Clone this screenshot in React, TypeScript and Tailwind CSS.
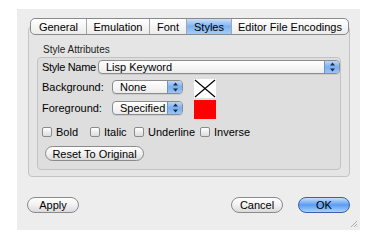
import React from "react";

const font = { fontFamily: '"Liberation Sans", Arial, sans-serif' };

function Arrows() {
  return (
    <svg width="7" height="10" viewBox="0 0 7 10">
      <path d="M3.5 0.5 L6 3.5 L1 3.5 Z" fill="#1b2a4a" />
      <path d="M3.5 9.5 L6 6.5 L1 6.5 Z" fill="#1b2a4a" />
    </svg>
  );
}

function Popup({ label, className }: { label: string; className: string }) {
  return (
    <div
      className={`flex items-stretch h-[14px] rounded-[4px] border border-[#8c8c8c] bg-gradient-to-b from-white to-[#ececec] shadow-[0_1px_0_rgba(0,0,0,0.08)] overflow-hidden ${className}`}
    >
      <span className="flex-1 pl-[7px] text-[11px] leading-[12px] text-black whitespace-nowrap">{label}</span>
      <span className="w-[15px] flex items-center justify-center border-l border-[#6f93c7] bg-gradient-to-b from-[#bcd6f6] via-[#79aeee] to-[#9ac5f6]">
        <Arrows />
      </span>
    </div>
  );
}

function Check({ label }: { label: string }) {
  return (
    <div className="flex items-center gap-[4px]">
      <span className="w-[10px] h-[10px] rounded-[2px] border border-[#8a8a8a] bg-gradient-to-b from-white to-[#dcdcdc]" />
      <span className="text-[11px] leading-[12px] text-black whitespace-nowrap">{label}</span>
    </div>
  );
}

function Button({ label, className, blue }: { label: string; className: string; blue?: boolean }) {
  return (
    <div
      className={`rounded-full border flex items-center justify-center text-[11px] leading-[12px] text-black whitespace-nowrap ${
        blue
          ? "border-[#3b5fa8] bg-gradient-to-b from-[#c6defa] via-[#5a9cf0] to-[#a9d2fb]"
          : "border-[#8a8a8a] bg-gradient-to-b from-white via-[#f1f1f1] to-[#dadada]"
      } ${className}`}
    >
      {label}
    </div>
  );
}

const tabs = ["General", "Emulation", "Font", "Styles", "Editor File Encodings"];
const tabWidths = ["w-[55px]", "w-[63px]", "w-[37px]", "w-[45px]", "w-[117px]"];

export default function App() {
  return (
    <div className="w-[379px] h-[242px] bg-white pt-[9px] pl-[17px]" style={font}>
      <div className="w-[343px] h-[221px] bg-[#ededed] flex flex-col relative">
        <div className="flex pt-[9px] pl-[13px] relative z-10">
          <div className="flex h-[17px] rounded-[5px] border border-[#8a8a8a] bg-gradient-to-b from-white to-[#ececec] overflow-hidden">
            {tabs.map((t, i) => (
              <div
                key={t}
                className={`${tabWidths[i]} flex items-center justify-center text-[11px] leading-[12px] text-black whitespace-nowrap ${
                  i > 0 ? "border-l border-[#a5a5a5]" : ""
                } ${t === "Styles" ? "bg-gradient-to-b from-[#c9e0fb] via-[#7eb2ef] to-[#a3cdf8]" : ""}`}
              >
                {t}
              </div>
            ))}
          </div>
        </div>
        <div className="ml-[11px] mr-[10px] -mt-[9px] h-[151px] rounded-[4px] border border-[#c4c4c4] bg-[#e5e5e5] px-[8px] pt-[17px]">
          <div className="text-[10px] leading-[11px] text-[#222] pl-[6px] whitespace-nowrap">Style Attributes</div>
          <div className="mt-[2px] h-[113px] rounded-[4px] border border-[#c2c2c2] bg-[#dedede] pl-[4px] pt-[2px]">
            <div className="flex items-center">
              <span className="w-[56px] text-[11px] leading-[12px] text-black whitespace-nowrap tracking-[-0.3px]">Style Name</span>
              <Popup label="Lisp Keyword" className="w-[242px]" />
            </div>
            <div className="flex mt-[5px]">
              <div className="flex flex-col">
                <div className="flex items-center h-[20px] pb-[4px]">
                  <span className="w-[70px] text-[11px] leading-[12px] text-black whitespace-nowrap">Background:</span>
                  <Popup label="None" className="w-[71px]" />
                </div>
                <div className="flex items-center h-[20px] mt-[1px] pb-[4px]">
                  <span className="w-[70px] text-[11px] leading-[12px] text-black whitespace-nowrap">Foreground:</span>
                  <Popup label="Specified" className="w-[71px]" />
                </div>
              </div>
              <div className="flex flex-col ml-[11px] gap-[2px]">
                <svg width="22" height="19" viewBox="0 0 22 19" className="bg-white">
                  <path d="M1 1 L21 18 M21 1 L1 18" stroke="#000" strokeWidth="1.2" />
                </svg>
                <div className="w-[22px] h-[19px] bg-[#ff0000]" />
              </div>
            </div>
            <div className="flex items-center mt-[6px]">
              <div className="w-[48px]"><Check label="Bold" /></div>
              <div className="w-[44px]"><Check label="Italic" /></div>
              <div className="w-[66px]"><Check label="Underline" /></div>
              <Check label="Inverse" />
            </div>
            <Button label="Reset To Original" className="w-[99px] h-[15px] mt-[8px] ml-[3px]" />
          </div>
        </div>
        <div className="flex items-center px-[10px] mt-[20px]">
          <Button label="Apply" className="w-[52px] h-[16px]" />
          <div className="flex-1" />
          <Button label="Cancel" className="w-[52px] h-[16px]" />
          <Button label="OK" className="w-[52px] h-[16px] ml-[15px]" blue />
        </div>
        <svg width="8" height="8" viewBox="0 0 8 8" className="absolute right-[2px] bottom-[2px]">
          <path d="M7 1 L1 7 M7 4 L4 7 M7 6.5 L6.5 7" stroke="#999" strokeWidth="0.8" />
        </svg>
      </div>
    </div>
  );
}
